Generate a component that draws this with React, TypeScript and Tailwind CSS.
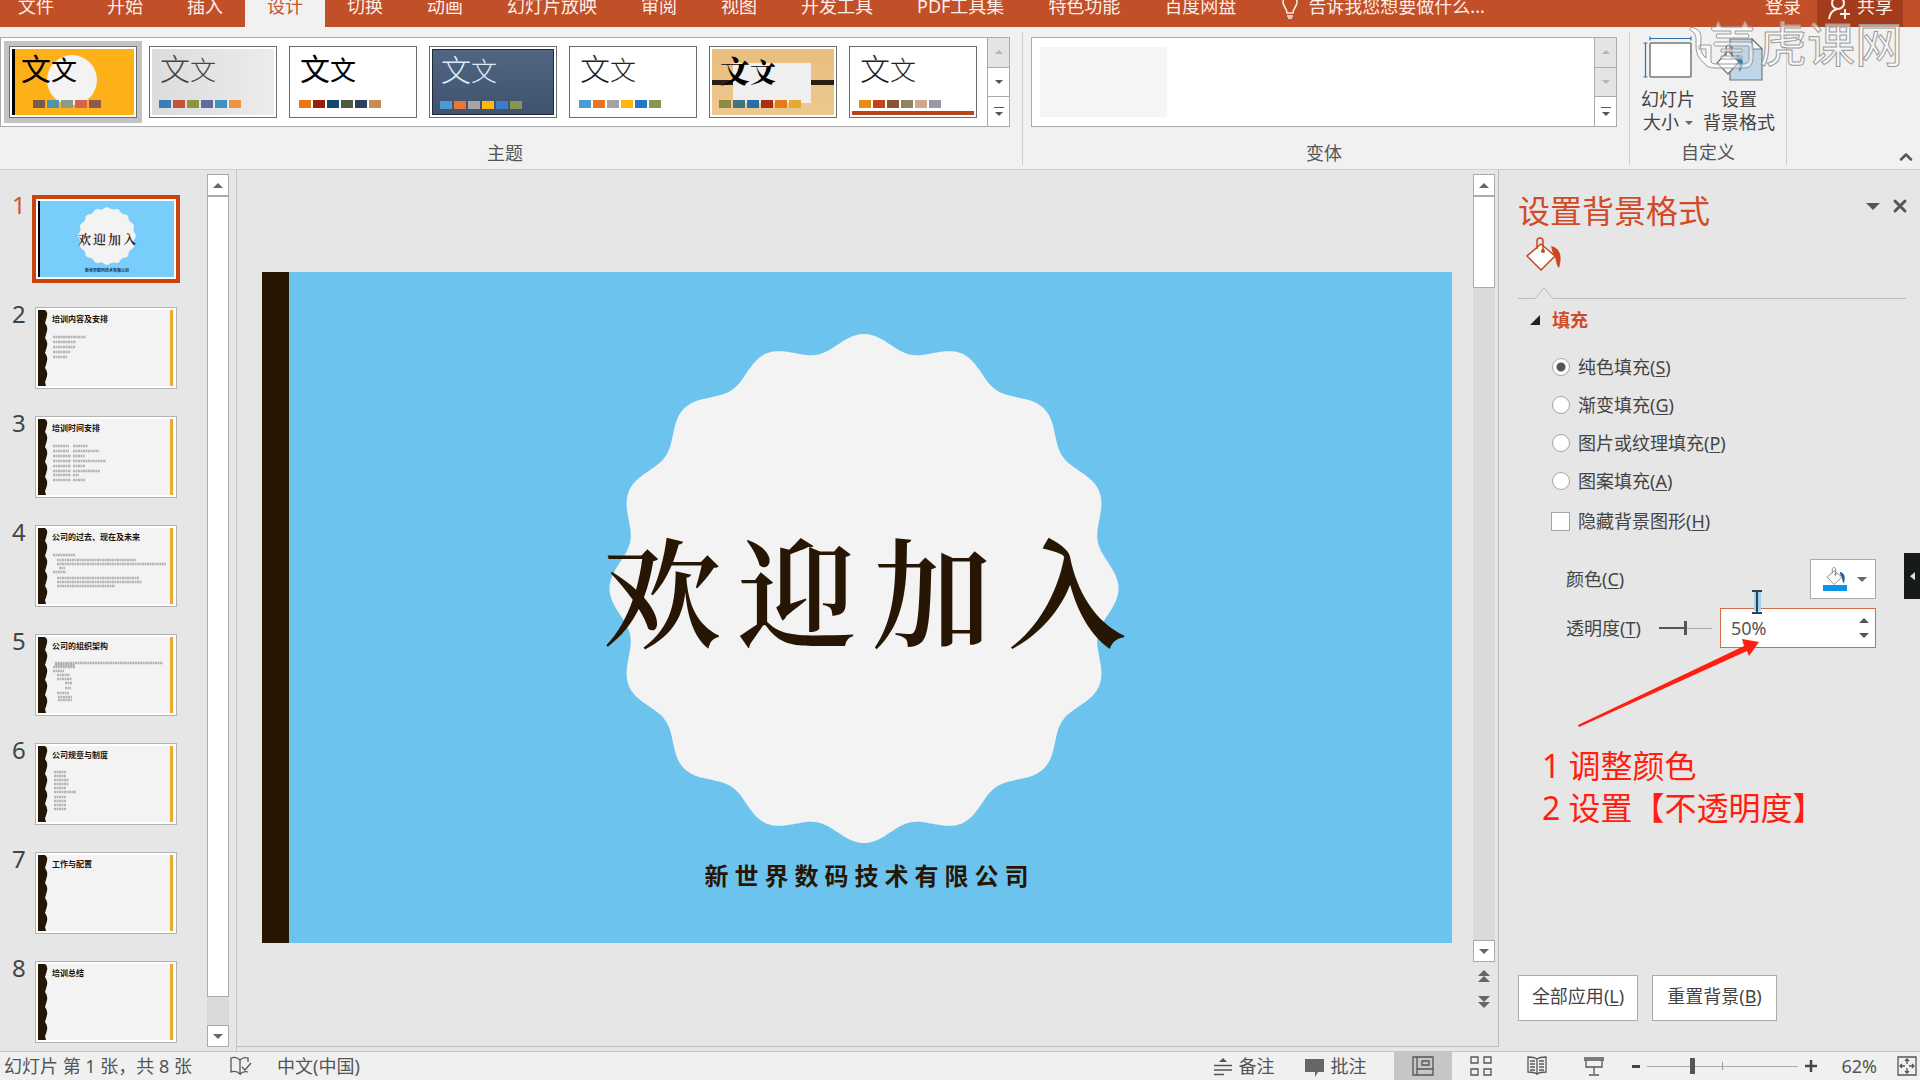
import type { ReactNode } from 'react';
import { ChevronUp, X } from 'lucide-react';

const tabs = ['开始', '插入', '设计', '切换', '动画', '幻灯片放映', '审阅', '视图', '开发工具', 'PDF工具集', '特色功能', '百度网盘'];

type Theme = { bg: string; text: string; swatches: string[] };

const themes: Theme[] = [
    { bg: 'bg-[#fdb018] border-l-3 border-black', text: 'text-black', swatches: ['#7a5a48', '#4f97a8', '#8c9a86', '#d9604c', '#8a5a50'] },
    { bg: 'bg-linear-to-r from-[#dcdcdc] to-[#ececec]', text: 'text-[#444] font-light', swatches: ['#3d7ab8', '#c2533b', '#8f9440', '#5d6c9c', '#3f92bd', '#ee9440'] },
    { bg: 'bg-white', text: 'text-black', swatches: ['#e8770f', '#96210f', '#15486f', '#4d5942', '#2b3f63', '#c98a55'] },
    { bg: 'bg-linear-to-b from-[#526583] to-[#3f5270] border border-[#1f2937]', text: 'text-[#dcecf8] font-light', swatches: ['#4d9ad4', '#ee7433', '#a5a5a5', '#ffb50d', '#3d7cc6', '#8b9552'] },
    { bg: 'bg-white', text: 'text-[#222] font-light', swatches: ['#4b9bd3', '#e8741e', '#a3a3a3', '#ffb50d', '#2577c2', '#8b9552'] },
    { bg: 'bg-linear-to-b from-[#e9bd7f] to-[#edc88f]', text: 'text-black font-black font-[Noto_Serif_CJK_SC,serif]', swatches: ['#8e8a45', '#3f7581', '#2a6ea8', '#a92e12', '#e57c17', '#e5aa35'] },
    { bg: 'bg-white border-b-4 border-[#bb4419]', text: 'text-[#222] font-light', swatches: ['#e98c12', '#c4421d', '#8a5533', '#8d8560', '#cfa78c', '#979aa3'] },
];

// each body line is [x, y, width] inside a 142x81 thumbnail
const slides: { title: string; lines: number[][] }[] = [
    { title: '', lines: [] },
    { title: '培训内容及安排', lines: [[18, 29, 33], [18, 34, 23], [18, 39, 22], [18, 44, 17], [18, 49, 14]] },
    { title: '培训时间安排', lines: [[18, 29, 16], [38, 29, 15], [18, 34, 16], [38, 34, 26], [18, 39, 18], [38, 39, 12], [18, 44, 18], [38, 44, 33], [18, 49, 18], [38, 49, 12], [18, 54, 18], [38, 54, 27], [18, 58, 18], [38, 58, 6], [18, 63, 18], [38, 63, 12]] },
    { title: '公司的过去、现在及未来', lines: [[18, 29, 22], [22, 34, 79], [22, 38, 109], [24, 42, 6], [18, 46, 13], [22, 52, 82], [22, 56, 85], [22, 60, 58]] },
    { title: '公司的组织架构', lines: [[20, 28, 108], [20, 30, 20], [18, 32, 22], [18, 36, 11], [22, 40, 13], [22, 44, 15], [30, 48, 7], [30, 53, 6], [22, 58, 12], [23, 62, 14], [23, 65, 14]] },
    { title: '公司规章与制度', lines: [[19, 28, 12], [19, 32, 12], [19, 36, 15], [19, 40, 15], [19, 44, 12], [19, 48, 22], [19, 53, 12], [19, 57, 12], [19, 61, 12], [19, 65, 12]] },
    { title: '工作与配置', lines: [] },
    { title: '培训总结', lines: [] },
];

const fills = [
    { name: '纯色填充', key: 'S' },
    { name: '渐变填充', key: 'G' },
    { name: '图片或纹理填充', key: 'P' },
    { name: '图案填充', key: 'A' },
];

function sealPath() {
    const pts: string[] = [];
    for (let i = 0; i < 720; i++) {
        const a = (i / 720) * Math.PI * 2;
        const r = 246 + 8 * Math.cos(16 * a);
        pts.push(`${(255 + r * Math.sin(a)).toFixed(1)} ${(255 - r * Math.cos(a)).toFixed(1)}`);
    }
    return `M${pts.join('L')}Z`;
}

const seal = sealPath();

function Seal({ className }: { className: string }) {
    return (
        <svg viewBox="0 0 510 510" className={className}>
            <path d={seal} fill="#f3f3f3" />
        </svg>
    );
}

function Triangle({ down = false, className = 'w-3 text-[#666]' }: { down?: boolean; className?: string }) {
    return (
        <svg viewBox="0 0 12 6" className={className}>
            <path d={down ? 'M0 0H12L6 6Z' : 'M0 6H12L6 0Z'} fill="currentColor" />
        </svg>
    );
}

function Key({ children }: { children: ReactNode }) {
    return <>(<span className="underline underline-offset-2">{children}</span>)</>;
}

function GalleryScroll({ moreOnly = false }: { moreOnly?: boolean }) {
    const off = 'bg-[#e4e4e4] text-[#b5b5b5]';
    return (
        <div className="flex flex-col w-[22px] shrink-0 border-l border-[#ababab] divide-y divide-[#ababab]">
            <button aria-label="向上" className={`flex-1 flex items-center justify-center ${off}`}>
                <Triangle className="w-2" />
            </button>
            <button aria-label="向下" className={`flex-1 flex items-center justify-center ${moreOnly ? off : 'bg-white text-[#555]'}`}>
                <Triangle down className="w-2" />
            </button>
            <button aria-label="更多" className="flex-1 flex flex-col gap-1 items-center justify-center bg-white text-[#555]">
                <span className="w-2.5 h-px bg-[#555]" />
                <Triangle down className="w-2" />
            </button>
        </div>
    );
}

function ThemeItem({ theme, index }: { theme: Theme; index: number }) {
    return (
        <button aria-label={`主题 ${index + 1}`} className={`p-[5px] -mx-[5px] ${index === 0 ? 'bg-[#c3c3c3]' : ''}`}>
            <span className="block w-32 h-[72px] p-0.5 bg-white border border-[#6e6e6e]">
                <span className={`relative block h-full overflow-hidden ${theme.bg}`}>
                    {index === 0 && <span className="absolute left-8 top-1.5 size-[50px] rounded-full bg-[#f3f3f3]" />}
                    {index === 5 && (
                        <>
                            <span className="absolute left-0 top-[31px] w-6 h-[5px] bg-[#2a1d12]" />
                            <span className="absolute right-0 top-[31px] w-6 h-[5px] bg-[#2a1d12]" />
                            <span className="absolute left-[21px] top-3.5 w-[78px] h-10 bg-[#efefef]" />
                        </>
                    )}
                    <span className={`absolute top-0.5 flex items-baseline ${index === 0 ? 'left-1.5' : 'left-2'} ${theme.text}`}>
                        <span className="text-3xl leading-9">文</span>
                        <span className="text-[26px] leading-9">文</span>
                    </span>
                    <span className={`absolute top-[51px] flex gap-0.5 ${index === 0 ? 'left-[18px]' : 'left-[7px]'}`}>
                        {theme.swatches.map((c) => (
                            <span key={c} className="w-3 h-2" style={{ background: c }} />
                        ))}
                    </span>
                </span>
            </span>
        </button>
    );
}

function Bucket({ className, spill }: { className: string; spill: string }) {
    return (
        <svg viewBox="0 0 36 34" className={className}>
            <path d="M25 9C33 11 37 17 33 31C29 27 31 21 27 17Z" fill={spill} />
            <path d="M15 7L29 19L15 33L1 19Z" fill="#fff" stroke="currentColor" strokeWidth="1.5" />
            <path d="M11 12V4C11 0 17 0 17 4V13" fill="none" stroke="currentColor" strokeWidth="1.5" />
            <circle cx="17" cy="14" r="2" fill="currentColor" />
        </svg>
    );
}

function TopBar() {
    return (
        <header className="flex items-end h-[27px] shrink-0 overflow-hidden bg-[#c14f28] text-[18px] leading-5 text-[#fdeee8] whitespace-nowrap">
            <button className="pl-[18px] pr-[31px] pb-[11px]">文件</button>
            {tabs.map((t) => (
                <button key={t} className={`px-[22px] pb-[11px] ${t === '设计' ? 'bg-[#f1f1f1] text-[#c8532d]' : ''}`}>
                    {t}
                </button>
            ))}
            <div className="flex items-end gap-2.5 pb-[11px] pl-6">
                <svg viewBox="0 0 16 24" className="w-4 h-6 -mb-[3px]" fill="none" stroke="currentColor" strokeWidth="1.5">
                    <path d="M5 18C5 13 1 12 1 7A7 7 0 0 1 15 7C15 12 11 13 11 18ZM5 21H11M6 23H10" />
                </svg>
                <span>告诉我您想要做什么...</span>
            </div>
            <button className="ml-auto pb-[11px] pr-4">登录</button>
            <button className="flex items-end gap-1.5 mr-[17px] px-2.5 pb-[11px] bg-[#a23c1b]">
                <svg viewBox="0 0 24 24" className="size-6 -mb-1" fill="none" stroke="currentColor" strokeWidth="2">
                    <circle cx="11" cy="7" r="6" />
                    <path d="M2 23C3 17 6 14 10 13M18 13V23M13 18H23" />
                </svg>
                共享
            </button>
        </header>
    );
}

function Ribbon() {
    return (
        <section className="flex h-[143px] shrink-0 pt-[5px] bg-[#f1f1f1] border-b border-[#cfcfcf] text-[18px] leading-5 text-[#555]">
            <div className="flex flex-col h-[133px] shrink-0 pt-[5px] pr-3 border-r border-[#cfcfcf]">
                <div className="flex h-[90px] bg-white border border-[#ababab]">
                    <div className="flex items-center gap-3 pl-2 pr-2.5">
                        {themes.map((t, i) => (
                            <ThemeItem key={i} theme={t} index={i} />
                        ))}
                    </div>
                    <GalleryScroll />
                </div>
                <p className="mt-4 text-center">主题</p>
            </div>
            <div className="flex flex-col flex-1 h-[133px] pt-[5px] pl-2 pr-3 border-r border-[#cfcfcf]">
                <div className="flex h-[90px] bg-white border border-[#ababab]">
                    <div className="flex-1 py-[9px] pl-2">
                        <div className="w-[127px] h-full bg-[#f5f4f6]" />
                    </div>
                    <GalleryScroll moreOnly />
                </div>
                <p className="mt-4 text-center">变体</p>
            </div>
            <div className="flex flex-col w-[157px] h-[133px] shrink-0 pt-1 border-r border-[#cfcfcf]">
                <div className="flex justify-center pr-1.5 leading-[23px] text-[#444]">
                    <button className="flex flex-col items-center w-[68px]">
                        <svg viewBox="0 0 50 46" className="w-[50px] h-[46px] mb-1.5" fill="none">
                            <rect x="7" y="7" width="41" height="34" rx="1" fill="#fff" stroke="#777" strokeWidth="1.5" />
                            <path d="M7 2.5H48M7 0.500V4.500M48 0.500V4.500M2.500 7V41M0.500 7H4.500M0.500 41H4.500" stroke="#2f6da8" strokeWidth="1.2" />
                        </svg>
                        <span>幻灯片</span>
                        <span className="flex items-center gap-1.5">
                            大小
                            <Triangle down className="w-2 text-[#666]" />
                        </span>
                    </button>
                    <button className="flex flex-col items-center w-[74px]">
                        <svg viewBox="0 0 50 46" className="w-[50px] h-[46px] mb-1.5" fill="none">
                            <path d="M16 3H38L48 13V44H16Z" fill="#bfd6e8" stroke="#777" strokeWidth="1.2" />
                            <path d="M38 3V13H48Z" fill="#fff" stroke="#777" strokeWidth="1.2" />
                            <path d="M23 19C30 21 31 30 25 36C26 29 26 25 21 23Z" fill="#2f7fb0" />
                            <path d="M14 15L25 26L14 38L3 27Z" fill="#fff" stroke="#777" strokeWidth="1.3" />
                            <path d="M12 20V12C12 8 18 8 18 12V22" stroke="#666" strokeWidth="1.3" />
                        </svg>
                        <span>设置</span>
                        <span>背景格式</span>
                    </button>
                </div>
                <p className="mt-2 text-center">自定义</p>
            </div>
            <div className="flex items-end justify-end w-[133px] shrink-0 pb-0.5">
                <button aria-label="折叠功能区" className="pr-1">
                    <ChevronUp className="size-5 text-[#555]" strokeWidth={3} />
                </button>
            </div>
        </section>
    );
}

function ScrollButton({ label, down = false }: { label: string; down?: boolean }) {
    return (
        <button aria-label={label} className="flex items-center justify-center h-[22px] w-full shrink-0 bg-white border border-[#ababab]">
            <Triangle down={down} className="w-2.5 text-[#666]" />
        </button>
    );
}

function Thumb({ slide, n }: { slide: (typeof slides)[number]; n: number }) {
    if (n === 1) {
        return (
            <button aria-label="幻灯片 1" className="w-[148px] h-[88px] -m-[3px] p-0.5 bg-white border-4 border-[#c9430f]">
                <span className="relative flex h-full items-center justify-center bg-[#78cdfa] border-l-2 border-black">
                    <Seal className="absolute left-[38px] top-1.5 size-[58px]" />
                    <span className="relative flex gap-0.5 text-[13px] leading-4 font-semibold font-[Noto_Serif_CJK_SC,Noto_Sans_CJK_SC,serif] text-[#332010]">
                        <span>欢</span>
                        <span>迎</span>
                        <span>加</span>
                        <span>入</span>
                    </span>
                    <span className="absolute bottom-1 text-[4px] leading-[5px] font-bold text-[#20303c]">新世界数码技术有限公司</span>
                </span>
            </button>
        );
    }
    return (
        <button aria-label={`幻灯片 ${n}`} className="relative w-[142px] h-[82px] p-0.5 bg-white border border-[#b3b3b3]">
            <span className="block h-full bg-[#f3f3f3]" />
            <svg viewBox="0 0 142 82" className="absolute -left-px -top-px w-[142px] h-[82px]">
                <path d="M3 3H10Q13 5 12 9T10 16Q13 20 12 24T10 31Q13 35 12 39T10 46Q13 50 12 54T10 61Q13 65 12 69T10 75L11 79H3Z" fill="#241606" />
                <rect x="135" y="3" width="3" height="76" fill="#e8ac2e" />
                {slide.lines.map(([x, y, w], i) => (
                    <path key={i} d={`M${x} ${y + 1}h${w}`} stroke="#777" strokeOpacity="0.5" strokeWidth="2.5" strokeDasharray="2 0.500" />
                ))}
            </svg>
            <span className="absolute left-4 top-1 text-[8px] leading-[13px] font-bold text-[#1c140c]">{slide.title}</span>
        </button>
    );
}

function SlideList() {
    return (
        <nav className="flex w-[237px] shrink-0 border-r border-[#c4c4c4]">
            <ol className="flex flex-col gap-[27px] w-[207px] pt-7 overflow-hidden">
                {slides.map((s, i) => (
                    <li key={i} className="flex h-[82px] shrink-0">
                        <span className={`w-[35px] shrink-0 pl-3 text-2xl leading-[14px] ${i === 0 ? 'text-[#d0532b]' : 'text-[#444]'}`}>{i + 1}</span>
                        <Thumb slide={s} n={i + 1} />
                    </li>
                ))}
            </ol>
            <div className="flex flex-col w-[22px] py-1 bg-[#dadada] bg-clip-content">
                <ScrollButton label="上移" />
                <div className="flex-1 bg-white border border-[#ababab]" />
                <div className="h-7" />
                <ScrollButton label="下移" down />
            </div>
        </nav>
    );
}

function Editor() {
    return (
        <main className="flex flex-1 min-w-0 mb-1 border-r border-b border-[#bdbdbd]">
            <div className="flex-1 min-w-0 pl-[25px] pr-[21px] pt-[102px]">
                <article className="relative flex flex-col items-center justify-center aspect-[1190/671] bg-[#6cc4ee] border-l-[27px] border-[#271604]">
                    <Seal className="absolute left-[calc(50%-7px)] top-[61px] -translate-x-1/2 size-[511px]" />
                    <h1 className="absolute top-[246px] inset-x-0 pr-3 flex justify-center gap-4 text-[119px] leading-[140px] font-semibold font-[Noto_Serif_CJK_SC,Noto_Sans_CJK_SC,serif] text-[#271604]">
                        {['欢', '迎', '加', '入'].map((c) => (
                            <span key={c}>{c}</span>
                        ))}
                    </h1>
                    <p className="absolute bottom-[51px] inset-x-0 pr-2 flex justify-center gap-1.5 text-2xl leading-8 font-bold text-[#271604]">
                        {Array.from('新世界数码技术有限公司').map((c) => (
                            <span key={c}>{c}</span>
                        ))}
                    </p>
                </article>
            </div>
            <div className="flex flex-col items-center w-[22px] mr-[3px] pt-1">
                <div className="flex flex-col flex-1 w-full bg-[#dadada]">
                    <ScrollButton label="向上滚动" />
                    <div className="h-[92px] bg-white border border-[#ababab]" />
                    <div className="flex-1" />
                    <ScrollButton label="向下滚动" down />
                </div>
                <button aria-label="上一张" className="mt-2">
                    <Triangle />
                    <Triangle />
                </button>
                <button aria-label="下一张" className="mt-3.5 mb-[38px]">
                    <Triangle down />
                    <Triangle down />
                </button>
            </div>
        </main>
    );
}

function FormatPane() {
    return (
        <aside className="relative flex flex-col w-[421px] shrink-0 pl-[19px] pr-3.5 text-[18px] leading-6 text-[#444]">
            <div className="flex items-start justify-between pt-5">
                <h2 className="text-[32px] leading-[42px] text-[#d24a26]">设置背景格式</h2>
                <div className="flex items-center gap-2.5 pt-1.5 -mr-1 text-[#555]">
                    <button aria-label="窗格选项">
                        <Triangle down className="w-3.5" />
                    </button>
                    <button aria-label="关闭">
                        <X className="size-5" strokeWidth={3.5} />
                    </button>
                </div>
            </div>
            <button aria-label="填充" className="self-start ml-2 mt-[5px]">
                <Bucket className="w-9 h-[34px] text-[#c9481f]" spill="#c9481f" />
            </button>
            <svg viewBox="0 0 388 12" preserveAspectRatio="xMinYMin slice" className="w-full h-3 mt-4" fill="none">
                <path d="M0 11.500H17L26 1L35 11.500H400" stroke="#bcbcbc" />
            </svg>
            <button className="flex items-center self-start gap-3 pl-3 mt-[9px] font-bold text-[#d24a26]">
                <svg viewBox="0 0 10 10" className="size-2.5">
                    <path d="M0 10H10V0Z" fill="#222" />
                </svg>
                填充
            </button>
            <div className="flex flex-col gap-3.5 pl-[34px] mt-[23px]">
                {fills.map((f, i) => (
                    <label key={f.key} className="flex items-center gap-2">
                        <input
                            type="radio"
                            name="fill"
                            defaultChecked={i === 0}
                            className="appearance-none size-[18px] rounded-full border border-[#a5a5a5] bg-white checked:bg-[radial-gradient(circle,#555_0_4px,#fff_5px)]"
                        />
                        <span>{f.name}<Key>{f.key}</Key></span>
                    </label>
                ))}
                <label className="flex items-center gap-2 mt-0.5 -ml-px">
                    <input type="checkbox" className="appearance-none size-[19px] border border-[#a5a5a5] bg-white" />
                    <span>隐藏背景图形<Key>H</Key></span>
                </label>
            </div>
            <div className="flex items-center justify-between pl-12 pr-[30px] mt-[26px]">
                <span>颜色<Key>C</Key></span>
                <button aria-label="颜色" className="flex items-center gap-2.5 h-10 pl-3 pr-2 bg-white border border-[#ababab]">
                    <span className="block w-6">
                        <Bucket className="w-[22px] h-[18px] ml-0.5 text-[#777]" spill="#2b5f8f" />
                        <span className="block h-1.5 bg-[#0c95e6]" />
                    </span>
                    <Triangle down className="w-2.5 text-[#666]" />
                </button>
            </div>
            <div className="flex items-center pl-12 pr-[30px] mt-[9px]">
                <label htmlFor="alpha" className="shrink-0">透明度<Key>T</Key></label>
                <input
                    type="range"
                    aria-label="透明度滑块"
                    defaultValue={50}
                    className="appearance-none w-[53px] h-4 ml-auto mr-2 [background:linear-gradient(#555,#555)_left_center/50%_2px_no-repeat,linear-gradient(#aaa,#aaa)_center/100%_1px_no-repeat] [&::-webkit-slider-thumb]:appearance-none [&::-webkit-slider-thumb]:w-[3px] [&::-webkit-slider-thumb]:h-3.5 [&::-webkit-slider-thumb]:bg-[#555]"
                />
                <div className="flex items-center justify-between w-[156px] h-10 shrink-0 pr-1.5 bg-white border border-[#d2694a]">
                    <input id="alpha" type="text" defaultValue="50%" className="w-24 pl-2.5 text-[#555] outline-none" />
                    <div className="flex flex-col gap-2.5">
                        <button aria-label="增加"><Triangle className="w-2.5 text-[#555]" /></button>
                        <button aria-label="减少"><Triangle down className="w-2.5 text-[#555]" /></button>
                    </div>
                </div>
            </div>
            <p className="pl-6 mt-[97px] text-[32px] leading-[42px] text-[#ff1e10] whitespace-nowrap">
                1 调整颜色
                <br />
                2 设置【不透明度】
            </p>
            <div className="flex gap-3.5 mt-auto mb-[30px]">
                <button className="h-[46px] w-[120px] pb-1 bg-white border border-[#ababab]">全部应用<Key>L</Key></button>
                <button className="h-[46px] w-[125px] pb-1 bg-white border border-[#ababab]">重置背景<Key>B</Key></button>
            </div>

            {/* pointer, arrow and the collapsed side tab float over the pane */}
            <svg viewBox="0 0 182 88" className="absolute left-[79px] top-[469px] w-[182px] h-[88px]">
                <path d="M0 86L166 7L164 0L181 3L171 17L169 12L1 88Z" fill="#ff1e10" />
            </svg>
            <svg viewBox="0 0 12 26" className="absolute left-[252px] top-[419px] w-3 h-[26px]">
                <rect x="3" y="2" width="7" height="20" fill="#9fd0ec" />
                <path d="M1 2H11M6 2V24M1 24H11" stroke="#2b4254" strokeWidth="2" fill="none" />
            </svg>
            <button aria-label="展开" className="absolute right-0 top-[383px] w-4 h-[46px] flex items-center justify-center bg-[#171a1a]">
                <svg viewBox="0 0 6 10" className="w-[5px]">
                    <path d="M6 0V10L0 5Z" fill="#ddd" />
                </svg>
            </button>
        </aside>
    );
}

function StatusBar() {
    return (
        <footer className="flex items-center h-[29px] shrink-0 pl-1 border-t border-[#c4c4c4] bg-[#f0f0f0] text-[18px] leading-6 text-[#555] whitespace-nowrap overflow-hidden">
            <span className="w-[226px]">幻灯片 第 1 张，共 8 张</span>
            <button aria-label="拼写检查" className="w-[47px]">
                <svg viewBox="0 0 22 20" className="w-[22px] h-5" fill="none" stroke="currentColor" strokeWidth="1.3">
                    <path d="M10 4C7 1 4 1 1 2V16C4 15 7 15 10 18V4C12 2 15 1 18 2V6M10 18C12 16 15 15 18 16M12 11L15 14L21 7" />
                </svg>
            </button>
            <span>中文(中国)</span>
            <button className="flex items-center gap-1.5 ml-auto">
                <svg viewBox="0 0 18 20" className="w-[18px] h-5" fill="none" stroke="currentColor" strokeWidth="1.5">
                    <path d="M5 6L9 2L13 6Z" fill="currentColor" stroke="none" />
                    <path d="M0 9.500H18M0 14H18M0 18.500H10" />
                </svg>
                备注
            </button>
            <button className="flex items-center gap-1.5 ml-[31px] mr-7">
                <svg viewBox="0 0 19 20" className="w-[19px] h-5 mt-1">
                    <path d="M0 1H19V14H13L10 19V14H0Z" fill="#666" />
                </svg>
                批注
            </button>
            <button aria-label="普通视图" className="flex items-center justify-center w-[58px] h-full bg-[#c6c6c6]">
                <svg viewBox="0 0 22 20" className="w-[22px] h-5" fill="none" stroke="currentColor" strokeWidth="1.3">
                    <path d="M1 1H21V19H1ZM5 1V19M5 13H21M10 5H17V9H10Z" />
                </svg>
            </button>
            <button aria-label="幻灯片浏览" className="ml-[18px]">
                <svg viewBox="0 0 22 20" className="w-[22px] h-5" fill="none" stroke="currentColor" strokeWidth="1.3">
                    <path d="M1 1H8V7H1ZM14 1H21V7H14ZM1 13H8V19H1ZM14 13H21V19H14Z" />
                </svg>
            </button>
            <button aria-label="阅读视图" className="ml-[35px]">
                <svg viewBox="0 0 20 20" className="size-5" fill="none" stroke="currentColor" strokeWidth="1.3">
                    <path d="M10 3C7 1 4 1 1 1V16C4 16 7 16 10 18C13 16 16 16 19 16V1C16 1 13 1 10 3V19M3 5H8M3 8H8M3 11H8M3 14H8M12 5H17M12 8H17M12 11H17M12 14H17" />
                </svg>
            </button>
            <button aria-label="放映" className="ml-[37px]">
                <svg viewBox="0 0 20 20" className="size-5" fill="none" stroke="currentColor" strokeWidth="1.3">
                    <path d="M0 2H20M0 4H20M2 4V11H18V4M10 11V18M5 19H15" />
                </svg>
            </button>
            <button aria-label="缩小" className="ml-7 w-2 h-[3px] bg-[#444]" />
            <input
                type="range"
                aria-label="缩放"
                min={10}
                max={100}
                defaultValue={36}
                className="appearance-none w-[151px] h-4 mx-[7px] [background:linear-gradient(#999,#999)_center/1px_8px_no-repeat,linear-gradient(#aaa,#aaa)_center/100%_1px_no-repeat] [&::-webkit-slider-thumb]:appearance-none [&::-webkit-slider-thumb]:w-[5px] [&::-webkit-slider-thumb]:h-4 [&::-webkit-slider-thumb]:bg-[#555]"
            />
            <button aria-label="放大">
                <svg viewBox="0 0 12 12" className="size-3">
                    <path d="M6 0V12M0 6H12" stroke="#444" strokeWidth="2.5" />
                </svg>
            </button>
            <button className="ml-6">62%</button>
            <button aria-label="适应窗口" className="ml-5 mr-[3px]">
                <svg viewBox="0 0 20 20" className="size-5" fill="none" stroke="currentColor" strokeWidth="1.3">
                    <path d="M1 1H19V19H1ZM10 3V8M8 5L10 3L12 5M10 17V12M8 15L10 17L12 15M3 10H8M5 8L3 10L5 12M17 10H12M15 8L17 10L15 12" />
                </svg>
            </button>
        </footer>
    );
}

function Watermark() {
    return (
        <svg viewBox="0 0 214 52" className="absolute right-[18px] top-[18px] w-[214px] h-[52px] pointer-events-none" fill="#ffffff" fillOpacity="0.5" stroke="#9a9a9a" strokeWidth="1">
            <path d="M2 12Q1 8 6 10Q14 12 13 22Q11 35 18 40V31H11Q10 27 14 27H23V44Q24 46 28 46H56Q61 46 61 40V28H27Q24 25 28 24H60Q65 24 65 29V41Q64 50 57 50H27Q19 50 16 45Q7 39 8 24Q9 15 2 12Z" />
            <path d="M24 9H28L30 3L33 9H54L57 3L60 9H64Q66 12 64 13H47V16H60Q62 18 60 20H29Q27 18 29 16H43V13H25Q22 11 24 9Z" />
            <path d="M33 31H54V34H33ZM33 38H54V41H33Z" />
            <text x="71" y="44" fontSize="48" fontFamily="'Noto Sans CJK SC', sans-serif">虎课网</text>
        </svg>
    );
}

export default function App() {
    return (
        <div className="relative flex flex-col h-screen overflow-hidden bg-[#e6e6e6] font-[Noto_Sans,Noto_Sans_CJK_SC,sans-serif]">
            <TopBar />
            <Ribbon />
            <div className="flex flex-1 min-h-0">
                <SlideList />
                <Editor />
                <FormatPane />
            </div>
            <StatusBar />
            <Watermark />
        </div>
    );
}
